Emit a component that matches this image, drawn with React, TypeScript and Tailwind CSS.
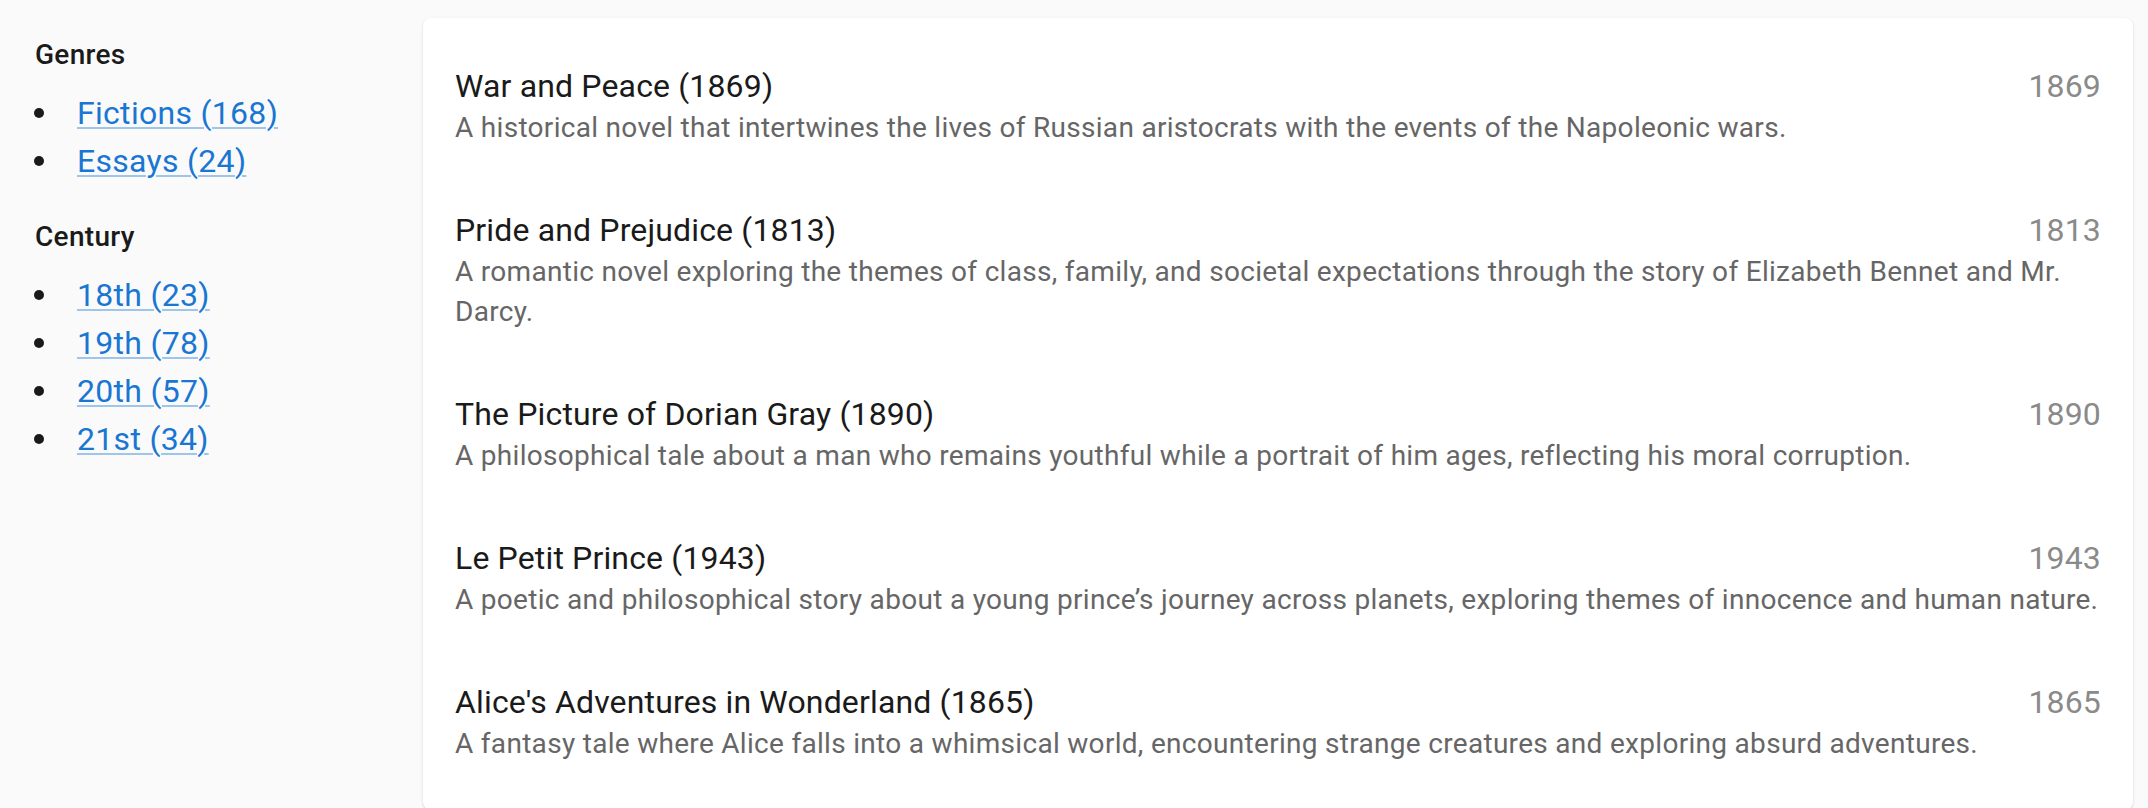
const genres = [
  { label: 'Fictions (168)' },
  { label: 'Essays (24)' },
];

const centuries = [
  { label: '18th (23)' },
  { label: '19th (78)' },
  { label: '20th (57)' },
  { label: '21st (34)' },
];

const books = [
  {
    title: 'War and Peace (1869)',
    year: 1869,
    description:
      'A historical novel that intertwines the lives of Russian aristocrats with the events of the Napoleonic wars.',
  },
  {
    title: 'Pride and Prejudice (1813)',
    year: 1813,
    description:
      'A romantic novel exploring the themes of class, family, and societal expectations through the story of Elizabeth Bennet and Mr. Darcy.',
  },
  {
    title: 'The Picture of Dorian Gray (1890)',
    year: 1890,
    description:
      'A philosophical tale about a man who remains youthful while a portrait of him ages, reflecting his moral corruption.',
  },
  {
    title: 'Le Petit Prince (1943)',
    year: 1943,
    description:
      'A poetic and philosophical story about a young prince\u2019s journey across planets, exploring themes of innocence and human nature.',
  },
  {
    title: "Alice's Adventures in Wonderland (1865)",
    year: 1865,
    description:
      'A fantasy tale where Alice falls into a whimsical world, encountering strange creatures and exploring absurd adventures.',
  },
];

const FilterList = ({ title, items, last }: { title: string; items: { label: string }[]; last?: boolean }) => (
  <div className={last ? '' : 'mb-[31px]'}>
    <h2 className="text-[28px] leading-[42px] font-medium tracking-[0.01071em] text-[#1a1a1a] mb-[13px]">{title}</h2>
    <ul>
      {items.map(item => (
        <li key={item.label} className="flex items-center h-[48px]">
          <span className="w-[10px] h-[10px] rounded-full bg-[#1a1a1a] -ml-px mr-[33px] shrink-0"></span>
          <a
            href="#"
            className="text-[32px] leading-[48px] tracking-[0.00938em] text-[#1976d2] underline decoration-[#1976d2]/40 decoration-2 underline-offset-[3px]"
          >
            {item.label}
          </a>
        </li>
      ))}
    </ul>
  </div>
);

export default function App() {
  return (
    <div
      className="min-h-screen bg-[#fafafa] flex items-start"
      style={{ fontFamily: 'Roboto, "Liberation Sans", sans-serif' }}
    >
      <aside className="w-[423px] shrink-0 pt-[34px] pl-[35px]">
        <FilterList title="Genres" items={genres} />
        <FilterList title="Century" items={centuries} last />
      </aside>

      <main className="flex-1 mt-[18px] mr-[15px] bg-white rounded-[8px] shadow-[0_1px_3px_rgba(0,0,0,0.12),0_1px_2px_rgba(0,0,0,0.06)] py-[16px]">
        <ul>
          {books.map(book => (
            <li key={book.title} className="px-[32px] py-[30px]">
              <div className="flex items-baseline justify-between gap-4 tracking-[0.00938em]">
                <span className="text-[32px] leading-[44px] text-[#1a1a1a]">{book.title}</span>
                <span className="text-[32px] leading-[44px] text-[#8a8a8a]">{book.year}</span>
              </div>
              <p className="text-[28px] leading-[40px] tracking-[0.01071em] text-[#666666]">{book.description}</p>
            </li>
          ))}
        </ul>
      </main>
    </div>
  );
}
